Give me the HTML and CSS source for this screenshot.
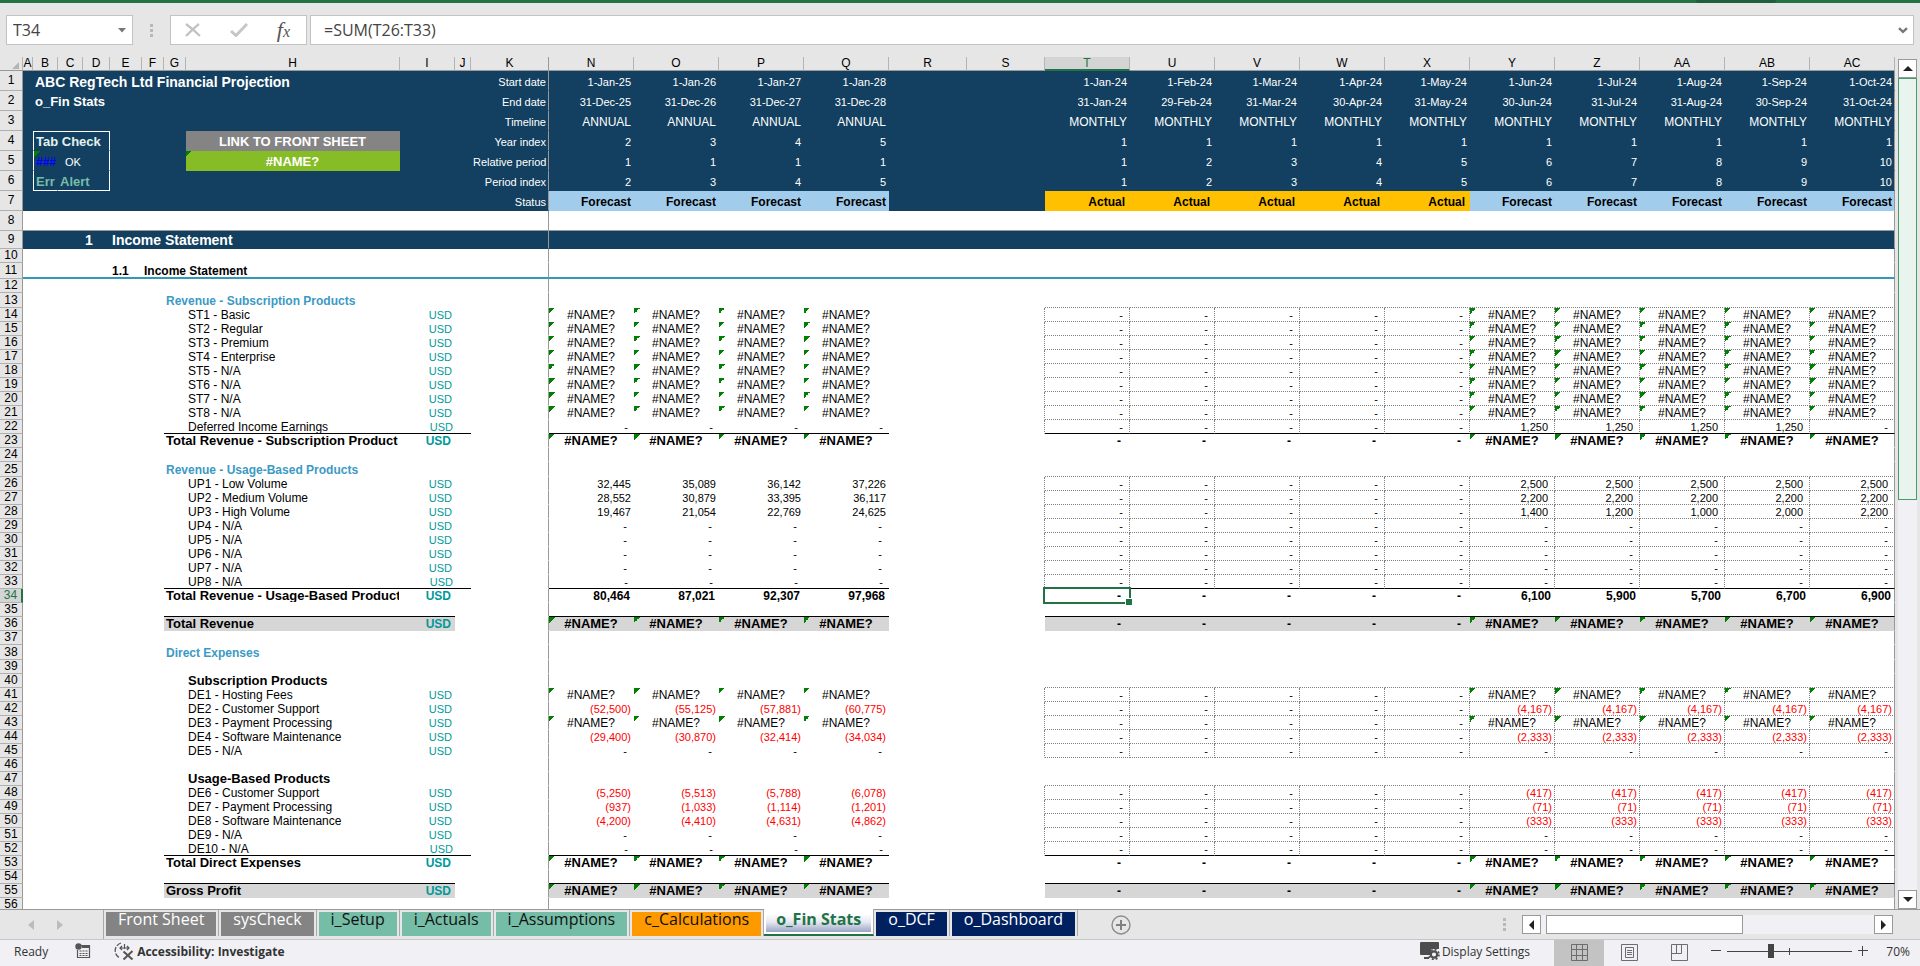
FILE: index.html
```html
<!DOCTYPE html>
<html lang="en">
<head>
<meta charset="utf-8">
<title>o_Fin Stats</title>
<link rel="stylesheet" href="styles.css">
</head>
<body>
<div class="titlebar"><span class="titlebar-search"></span></div>
<header class="formula-bar">
  <div class="name-box">
    <input class="bar-input" type="text" value="T34" aria-label="Name box">
    <button class="name-arrow" aria-label="Open name list"><svg width="8" height="5" viewBox="0 0 8 5"><path d="M0 0h8L4 4.5z" fill="#777"/></svg></button>
  </div>
  <span class="grip"></span>
  <div class="fx-buttons">
    <button aria-label="Cancel"><svg width="16" height="14" viewBox="0 0 16 14"><path d="M1 1C5 4 10 8 15 13M14 1C10 4 5 9 1 13" fill="none" stroke="#c2c2c2" stroke-width="2.2"/></svg></button>
    <button aria-label="Enter"><svg width="18" height="14" viewBox="0 0 18 14"><path d="M1 8l5 4.5L17 1" fill="none" stroke="#c6c6c6" stroke-width="3"/></svg></button>
    <button class="fx" aria-label="Insert function"><i>f</i><i class="fx-small">x</i></button>
  </div>
  <div class="formula-box">
    <input class="bar-input" type="text" value="=SUM(T26:T33)" aria-label="Formula">
    <button class="expand" aria-label="Expand formula bar"><svg width="10" height="7" viewBox="0 0 10 7"><path d="M1 1.2l4 3.6 4-3.6" fill="none" stroke="#777" stroke-width="2.4"/></svg></button>
  </div>
</header>
<main class="workspace">
  <div class="sheet">
    <table class="grid">
      <colgroup id="cols"></colgroup>
      <thead><tr id="heads"></tr></thead>
      <tbody id="rows"></tbody>
    </table>
  </div>
  <div class="vscroll">
    <button class="scroll-btn" aria-label="Scroll up"><svg width="10" height="5" viewBox="0 0 10 5"><path d="M0 5h10L5 0z" fill="#222"/></svg></button>
    <div class="vtrack"><div class="vthumb"></div></div>
    <button class="scroll-btn" aria-label="Scroll down"><svg width="10" height="5" viewBox="0 0 10 5"><path d="M0 0h10L5 5z" fill="#222"/></svg></button>
  </div>
</main>
<nav class="tab-bar">
  <div class="tab-nav">
    <button aria-label="Previous sheet"><svg width="6" height="10" viewBox="0 0 6 10"><path d="M6 0v10L0 5z" fill="#bcbcbc"/></svg></button>
    <button aria-label="Next sheet"><svg width="6" height="10" viewBox="0 0 6 10"><path d="M0 0v10l6-5z" fill="#bcbcbc"/></svg></button>
  </div>
  <div class="tabs">
    <button class="tab grey"><span>Front Sheet</span></button>
    <button class="tab grey"><span>sysCheck</span></button>
    <button class="tab teal"><span>i_Setup</span></button>
    <button class="tab teal"><span>i_Actuals</span></button>
    <button class="tab teal"><span>i_Assumptions</span></button>
    <button class="tab orange"><span>c_Calculations</span></button>
    <button class="tab active"><span>o_Fin Stats</span></button>
    <button class="tab navy"><span>o_DCF</span></button>
    <button class="tab navy last"><span>o_Dashboard</span></button>
  </div>
  <button class="add-tab" aria-label="New sheet"><svg width="20" height="20" viewBox="0 0 20 20"><circle cx="10" cy="10" r="9" fill="none" stroke="#8c8c8c" stroke-width="1.4"/><path d="M10 5v10M5 10h10" stroke="#808080" stroke-width="2"/></svg></button>
  <span class="grip"></span>
  <div class="hscroll">
    <button class="scroll-btn" aria-label="Scroll left"><svg width="5" height="10" viewBox="0 0 5 10"><path d="M5 0v10L0 5z" fill="#222"/></svg></button>
    <div class="htrack"><div class="hthumb"></div></div>
    <button class="scroll-btn" aria-label="Scroll right"><svg width="5" height="10" viewBox="0 0 5 10"><path d="M0 0v10l5-5z" fill="#222"/></svg></button>
  </div>
</nav>
<footer class="status-bar">
  <span class="ready">Ready</span>
  <button class="macro" aria-label="Record macro"><svg width="16" height="16" viewBox="0 0 16 16"><path d="M5 2.5h9.5v12H2.500V7" fill="none" stroke="#555" stroke-width="1.200"/><path d="M7 2h8v3H7z" fill="#555"/><circle cx="3.500" cy="3.500" r="3.200" fill="#555"/><path d="M4.500 8h2M7.500 8h2M10.500 8h2M4.500 10.500h2M7.500 10.500h2M10.500 10.500h2M4.500 12.500h2M7.500 12.500h2M10.500 12.500h2" stroke="#555"/></svg></button>
  <button class="access"><svg width="20" height="18" viewBox="0 0 20 18"><path d="M7 1A8 8 0 0 0 5 15.500" fill="none" stroke="#555" stroke-width="1.300" stroke-dasharray="5 1.500"/><path d="M6 6h9M8 4L6 6l2 2M13 4l2 2-2 2M10.500 2v5" fill="none" stroke="#555" stroke-width="1.200"/><path d="M9.500 9.500l9 8M18.500 9L9.500 17.500" stroke="#555" stroke-width="2"/></svg><span>Accessibility: Investigate</span></button>
  <button class="display"><svg width="20" height="18" viewBox="0 0 20 18"><path d="M1 0h17a1 1 0 0 1 1 1v6h-8v6H1a1 1 0 0 1-1-1V1a1 1 0 0 1 1-1zM4 15h5v2H4z" fill="#4d4d4d"/><circle cx="14" cy="12.500" r="3.200" fill="none" stroke="#4d4d4d" stroke-width="2.200"/><circle cx="14" cy="12.500" r="5" fill="none" stroke="#4d4d4d" stroke-width="1.600" stroke-dasharray="2 1.930"/></svg><span>Display Settings</span></button>
  <div class="views">
    <button class="on" aria-label="Normal view"><svg width="17" height="17" viewBox="0 0 17 17"><path d="M.5.5h16v16H.5zM.5 5.500h16M.5 11.500h16M5.500.5v16M11.500.5v16" fill="none" stroke="#6d6d6d"/></svg></button>
    <button aria-label="Page layout view"><svg width="17" height="17" viewBox="0 0 17 17"><path d="M.5.5h16v16H.5zM4.500 3.500h8v10h-8zM6 6.500h5M6 8.500h5M6 10.500h5" fill="none" stroke="#6d6d6d"/></svg></button>
    <button aria-label="Page break view"><svg width="17" height="17" viewBox="0 0 17 17"><path d="M.5.5h16v16H.5zM.5 9.500h10v-9M5.500.5v9" fill="none" stroke="#6d6d6d"/></svg></button>
  </div>
  <div class="zoom">
    <button aria-label="Zoom out"><svg width="10" height="10" viewBox="0 0 10 10"><path d="M0 4.500h10" stroke="#444"/></svg></button>
    <input type="range" min="0" max="125" value="43" aria-label="Zoom">
    <button aria-label="Zoom in"><svg width="10" height="10" viewBox="0 0 10 10"><path d="M0 4.500h10M4.500 0v10" stroke="#444"/></svg></button>
    <span class="percent">70%</span>
  </div>
</footer>
<script src="grid.js"></script>
</body>
</html>
```

FILE: styles.css
```css
* { box-sizing: border-box; }

body {
  margin: 0;
  height: 100vh;
  display: flex;
  flex-direction: column;
  overflow: hidden;
  background: #e6e6e6;
  color: #333;
  font-family: "Open Sans", "Noto Sans", sans-serif;
  font-size: 12px;
}

button {
  display: flex;
  align-items: center;
  justify-content: center;
  margin: 0;
  padding: 0;
  border: 0;
  background: none;
  color: inherit;
  font: inherit;
  white-space: nowrap;
}

svg { display: block; flex: none; }

.titlebar {
  flex: none;
  display: flex;
  justify-content: flex-end;
  height: 3px;
  padding-right: 144px;
  background: #217346;
}
.titlebar-search { width: 80px; background: #1e5f3c; border-radius: 0 0 8px 8px; }

.formula-bar {
  flex: none;
  display: flex;
  align-items: center;
  height: 54px;
  padding: 0 6px;
}
.name-box, .fx-buttons, .formula-box {
  display: flex;
  align-items: center;
  height: 30px;
  border: 1px solid #c3c3c3;
  background: #fff;
}
.name-box { width: 127px; padding-right: 6px; }
.bar-input {
  flex: 1;
  min-width: 0;
  border: 0;
  outline: 0;
  padding: 0 0 0 6px;
  background: none;
  color: #444;
  font: 16px/24px "Open Sans", "Noto Sans", sans-serif;
}
.formula-box .bar-input { padding-left: 13px; }
.formula-box { flex: 1; margin-left: 3px; padding-right: 5px; }
.grip {
  width: 3px;
  height: 13px;
  background: repeating-linear-gradient(#b8b8b8 0 3px, transparent 3px 5px);
}
.formula-bar .grip { margin: 0 17px; }
.fx-buttons { width: 137px; justify-content: space-between; padding: 0 16px 0 14px; }
.fx { color: #555; font: 22px/22px "Liberation Serif", serif; }
.fx-small { font-size: 16px; padding-top: 4px; }

.workspace { flex: 1; min-height: 0; display: flex; }
.sheet { flex: 1; min-width: 0; overflow: hidden; background: #fff; }

.grid {
  width: 1895px;
  table-layout: fixed;
  border-spacing: 0;
  color: #000;
  font: 11px/13px "Liberation Sans", Arial, sans-serif;
}
.grid th {
  padding: 0;
  overflow: hidden;
  background: #e6e6e6;
  border-right: 1px solid #b4b4b4;
  border-bottom: 1px solid #999;
  font-size: 12px;
  font-weight: 400;
}
.grid tbody th { border-right-color: #999; border-bottom-color: #b0b0b0; }
.grid thead th.at-k { border-right-color: #999; }
.grid thead th.current {
  background: #d4d4d4;
  color: #217346;
  line-height: 12px;
  border-bottom: 2px solid #217346;
}
.grid tbody th.current {
  background: #d4d4d4;
  color: #217346;
  border-right: 2px solid #217346;
}
.grid td {
  padding: 1px 2px 0 2px;
  border: 0 solid transparent;
  border-width: 0 1px 1px 0;
  line-height: 12px;
  white-space: nowrap;
  text-align: right;
}
.grid td.text { text-align: left; font-size: 12px; }
.grid td.name { text-align: center; font-size: 12px; }
.grid td.err {
  background-image: linear-gradient(135deg, #008000 50%, transparent 50%);
  background-size: 6px 6px;
  background-repeat: no-repeat;
}
.grid td.inset { padding-right: 6px; }
.grid td.red { color: #f00; }
.grid td.usd { color: #009999; font-size: 11px; }

.grid .top td { background-color: #134060; color: #fff; padding-top: 2px; }
.grid .top td.words { font-size: 12px; }
.grid .top td.forecast { background-color: #a2ccec; color: #000; }
.grid .top td.actual { background-color: #ffc000; color: #000; padding-right: 4px; }
.grid td.forecast, .grid td.actual { font-size: 12px; font-weight: 700; }
.grid td.title { font-size: 14px; font-weight: 700; }
.grid td.subtitle { font-size: 13px; font-weight: 700; }
.grid .top td.link { background-color: #848484; font-size: 13px; font-weight: 700; text-align: center; }
.grid .top td.link-value { background-color: #86bc25; font-size: 13px; font-weight: 700; text-align: center; }
.grid .top td.box-left { border-left: 1px solid #fff; }
.grid .top td.box-right { border-right-color: #fff; }
.grid .top td.box-top { border-top: 1px solid #fff; }
.grid .top td.box-bottom { border-bottom-color: #fff; }
.grid .top td.hash { color: #00f; font-weight: 700; }
.grid .top td.ok { font-size: 11px; padding-left: 7px; }
.grid .top td.alert { color: #75bda7; }
.grid .top td.pale { color: #e3f2ee; }

.grid .section td { background-color: #134060; color: #fff; font-weight: 700; font-size: 14px; }
.grid .subsection td { border-bottom: 2px solid #3399bb; border-right-width: 0; font-weight: 700; }
.grid .freeze td { border-bottom-color: #999; border-right-width: 0; }
.grid td.heading { color: #3b9ac4; font-weight: 700; }
.grid td.strong { font-weight: 700; font-size: 13px; }

.grid .total td { font-weight: 700; font-size: 12px; padding-right: 3px; }
.grid .total td.text, .grid .total td.name { padding-top: 0; font-size: 13px; line-height: 13px; }
.grid .total td.name { padding-right: 2px; }
.grid .total td.text { overflow: hidden; }
.grid .total td.inset { padding-right: 8px; }
.grid td.fill { background-color: #d6d6d6; }
.grid td.rule { border-bottom-color: #000; border-right-width: 0; }
.grid td.dots { border-bottom: 1px dotted #808080; }
.grid td.dots-side { border-right: 1px dotted #808080; }
.grid td.at-k, .grid td.at-end { border-right: 1px solid #999; }

.grid td.selected { position: relative; }
.selected::before {
  content: "";
  position: absolute;
  inset: -2px;
  border: 2px solid #217346;
}
.selected::after {
  content: "";
  position: absolute;
  right: -3px;
  bottom: -3px;
  width: 6px;
  height: 6px;
  border: solid #fff;
  border-width: 1px 0 0 1px;
  background: #217346;
}

.vscroll { flex: none; width: 25px; padding: 2px 3px 0 3px; display: flex; flex-direction: column; }
.scroll-btn { flex: none; width: 19px; height: 19px; border: 1px solid #999; background: #fff; }
.vtrack { flex: 1; background: #f0f0f5; }
.vthumb { height: 52%; background: #eaf4ee; border: 1px solid #4c9a6c; }

.tab-bar {
  flex: none;
  display: flex;
  align-items: center;
  height: 30px;
  border-top: 1px solid #999;
  padding-right: 27px;
}
.tab-nav { display: flex; gap: 23px; width: 103px; padding-left: 28px; }
.tabs { display: flex; align-self: stretch; border-left: 1px solid #aaa; }
.tab {
  height: 26px;
  padding: 2px 2px 0 2px;
  border-right: 1px solid #aaa;
  font-size: 16px;
}
.tab span { height: 24px; line-height: 15px; padding: 0 12px; }
.grey { color: #fff; }
.grey span { background: #848484; }
.teal { color: #111; }
.teal span { background: #75bda7; }
.orange { color: #111; }
.orange span { background: #ff9900; }
.navy { color: #fff; }
.navy span { background: #002060; }
.tab.active {
  height: 27px;
  margin-top: -1px;
  padding-top: 3px;
  align-items: flex-start;
  background: #fff;
  border-bottom: 2px solid #217346;
  color: #217346;
  font-weight: 700;
}
.active span { height: 20px; padding: 0 10px; background: linear-gradient(#fff 10%, #e6e8f0 50%, #9aa5c4); }
.add-tab { margin-left: 33px; }
.tab-bar .grip { margin-left: auto; margin-right: 16px; }
.hscroll { display: flex; width: 371px; }
.htrack { flex: 1; padding-left: 5px; background: #f0f0f5; }
.hthumb { width: 60%; height: 19px; background: #fff; border: 1px solid #999; }

.status-bar {
  flex: none;
  display: flex;
  align-items: center;
  height: 27px;
  padding: 0 10px 4px 14px;
  border-top: 1px solid #c6c6c6;
  background: #f0f0f5;
}
.macro { margin-left: 27px; }
.access { margin-left: 23px; gap: 3px; font-weight: 700; }
.display { margin-left: auto; gap: 2px; }
.views { display: flex; align-self: stretch; margin: 0 0 -4px 24px; }
.views button { width: 50px; padding-bottom: 2px; }
.views .on { background: #c3c3c3; }
.zoom { display: flex; align-items: center; margin-left: 7px; }
.zoom input {
  appearance: none;
  width: 125px;
  height: 15px;
  margin: 0 6px;
  background:
    linear-gradient(#444, #444) 50% 50% / 1px 7px no-repeat,
    linear-gradient(#444, #444) 0 50% / 100% 1px no-repeat;
}
.zoom input::-webkit-slider-thumb { appearance: none; width: 6px; height: 14px; background: #444; }
.percent { width: 42px; text-align: right; }
```

FILE: grid.js
```javascript
(() => {
const columns = [
  ["A", 10], ["B", 25], ["C", 25], ["D", 27], ["E", 32], ["F", 22], ["G", 22],
  ["H", 214], ["I", 55], ["J", 16], ["K", 78],
  ["N", 85], ["O", 85], ["P", 85], ["Q", 85], ["R", 78], ["S", 78],
  ["T", 85], ["U", 85], ["V", 85], ["W", 85], ["X", 85],
  ["Y", 85], ["Z", 85], ["AA", 85], ["AB", 85], ["AC", 85]
];
const letters = columns.map(c => c[0]);
const annual = ["N", "O", "P", "Q"];
const monthly = letters.slice(letters.indexOf("T"));
const ERR = "#NAME?";

const rep = (v, n) => Array(n).fill(v);
const errA = rep(ERR, 4);
const dashA = rep("-", 4);
const errM = rep("-", 5).concat(rep(ERR, 5));
const dashM = rep("-", 10);
const fc = (...v) => rep("-", 5).concat(v);

const timing = {
  1: ["Start date", ["1-Jan-25", "1-Jan-26", "1-Jan-27", "1-Jan-28"],
    ["1-Jan-24", "1-Feb-24", "1-Mar-24", "1-Apr-24", "1-May-24", "1-Jun-24", "1-Jul-24", "1-Aug-24", "1-Sep-24", "1-Oct-24"]],
  2: ["End date", ["31-Dec-25", "31-Dec-26", "31-Dec-27", "31-Dec-28"],
    ["31-Jan-24", "29-Feb-24", "31-Mar-24", "30-Apr-24", "31-May-24", "30-Jun-24", "31-Jul-24", "31-Aug-24", "30-Sep-24", "31-Oct-24"]],
  3: ["Timeline", rep("ANNUAL", 4), rep("MONTHLY", 10)],
  4: ["Year index", [2, 3, 4, 5], rep(1, 10)],
  5: ["Relative period", rep(1, 4), [1, 2, 3, 4, 5, 6, 7, 8, 9, 10]],
  6: ["Period index", [2, 3, 4, 5], [1, 2, 3, 4, 5, 6, 7, 8, 9, 10]],
  7: ["Status", rep("Forecast", 4), rep("Actual", 5).concat(rep("Forecast", 5))]
};

const items = {
  14: ["ST1 - Basic", errA, errM], 15: ["ST2 - Regular", errA, errM],
  16: ["ST3 - Premium", errA, errM], 17: ["ST4 - Enterprise", errA, errM],
  18: ["ST5 - N/A", errA, errM], 19: ["ST6 - N/A", errA, errM],
  20: ["ST7 - N/A", errA, errM], 21: ["ST8 - N/A", errA, errM],
  22: ["Deferred Income Earnings", dashA, fc("1,250", "1,250", "1,250", "1,250", "-")],
  26: ["UP1 - Low Volume", ["32,445", "35,089", "36,142", "37,226"], fc(...rep("2,500", 5))],
  27: ["UP2 - Medium Volume", ["28,552", "30,879", "33,395", "36,117"], fc(...rep("2,200", 5))],
  28: ["UP3 - High Volume", ["19,467", "21,054", "22,769", "24,625"], fc("1,400", "1,200", "1,000", "2,000", "2,200")],
  29: ["UP4 - N/A", dashA, dashM], 30: ["UP5 - N/A", dashA, dashM],
  31: ["UP6 - N/A", dashA, dashM], 32: ["UP7 - N/A", dashA, dashM],
  33: ["UP8 - N/A", dashA, dashM],
  41: ["DE1 - Hosting Fees", errA, errM],
  42: ["DE2 - Customer Support", ["(52,500)", "(55,125)", "(57,881)", "(60,775)"], fc(...rep("(4,167)", 5))],
  43: ["DE3 - Payment Processing", errA, errM],
  44: ["DE4 - Software Maintenance", ["(29,400)", "(30,870)", "(32,414)", "(34,034)"], fc(...rep("(2,333)", 5))],
  45: ["DE5 - N/A", dashA, dashM],
  48: ["DE6 - Customer Support", ["(5,250)", "(5,513)", "(5,788)", "(6,078)"], fc(...rep("(417)", 5))],
  49: ["DE7 - Payment Processing", ["(937)", "(1,033)", "(1,114)", "(1,201)"], fc(...rep("(71)", 5))],
  50: ["DE8 - Software Maintenance", ["(4,200)", "(4,410)", "(4,631)", "(4,862)"], fc(...rep("(333)", 5))],
  51: ["DE9 - N/A", dashA, dashM], 52: ["DE10 - N/A", dashA, dashM]
};

const totals = {
  23: ["Total Revenue - Subscription Product", errA, errM],
  34: ["Total Revenue - Usage-Based Product", ["80,464", "87,021", "92,307", "97,968"], fc("6,100", "5,900", "5,700", "6,700", "6,900")],
  36: ["Total Revenue", errA, errM, true],
  53: ["Total Direct Expenses", errA, errM],
  55: ["Gross Profit", errA, errM, true]
};

const headings = { 13: "Revenue - Subscription Products", 25: "Revenue - Usage-Based Products", 38: "Direct Expenses" };
const groups = { 40: "Subscription Products", 47: "Usage-Based Products" };

const fixed = {
  1: { B: ["ABC RegTech Ltd Financial Projection", "text title", 7] },
  2: { B: ["o_Fin Stats", "text subtitle", 6] },
  4: { B: ["Tab Check", "text subtitle pale box-left box-right box-top", 3], H: ["LINK TO FRONT SHEET", "link"] },
  5: { B: ["###", "text hash err box-left"], C: ["OK", "text ok"], D: ["", "box-right"], H: [ERR, "link-value err"] },
  6: { B: ["Err", "text subtitle alert box-left box-bottom"], C: ["Alert", "text subtitle alert box-right box-bottom", 2] },
  9: { D: ["1", "text title"], E: ["Income Statement", "text title", 4] },
  11: { E: ["1.1", "text"], F: ["Income Statement", "text", 3] }
};

const heights = { 9: 18, 11: 16, 13: 15, 25: 15, 38: 15 };
const heightOf = r => heights[r] || (r < 9 ? 20 : 14);

function figureClass(v, isMonthly, isTotal) {
  if (v === ERR) return "name err";
  if (v === "-") return "inset";
  if (v[0] === "(") return "red";
  return isMonthly && !isTotal ? "inset" : "";
}

function cellsFor(r) {
  const cells = { ...(fixed[r] || {}) };
  const src = timing[r] || items[r] || totals[r];
  if (headings[r]) cells.G = [headings[r], "text heading", 2];
  if (groups[r]) cells.H = [groups[r], "text strong"];
  if (!src) return cells;
  if (timing[r]) cells.K = [src[0], ""];
  if (items[r]) cells.H = [src[0], "text"];
  if (totals[r]) cells.G = [src[0], "text", 2];
  if (!timing[r]) cells.I = ["USD", "usd"];
  const put = (cols, values, isMonthly) => cols.forEach((c, i) => {
    const v = values[i];
    let cls;
    if (timing[r]) cls = r === 7 ? v.toLowerCase() : r === 3 ? "words" : "";
    else cls = figureClass(v, isMonthly, !!totals[r]);
    cells[c] = [v, cls];
  });
  put(annual, src[1], false);
  put(monthly, src[2], true);
  return cells;
}

function lineClass(r, c) {
  const out = [];
  const isMonthly = monthly.includes(c);
  const isFigure = isMonthly || annual.includes(c);
  const next = totals[r + 1];
  if (next && (isFigure || "GHI".includes(c) || (c === "J" && !next[3]))) out.push("rule");
  else if (isMonthly && (items[r] || items[r + 1])) out.push("dots");
  if (items[r] && (isMonthly || c === "S")) out.push("dots-side");
  if (totals[r] && totals[r][3] && (isFigure || "GHI".includes(c))) out.push("fill");
  if (c === "K") out.push("at-k");
  if (c === "AC") out.push("at-end");
  if (r === 34 && c === "T") out.push("selected");
  return out.join(" ");
}

document.getElementById("cols").innerHTML =
  `<col style="width:23px">` + columns.map(c => `<col style="width:${c[1]}px">`).join("");

document.getElementById("heads").innerHTML =
  `<th><svg width="20" height="12" viewBox="0 0 20 12"><path d="M19 4v7h-7z" fill="#b4b4b4"/></svg></th>` +
  letters.map(l => `<th class="${l === "T" ? "current" : l === "K" ? "at-k" : ""}">${l}</th>`).join("");

let html = "";
for (let r = 1; r <= 56; r++) {
  const cells = cellsFor(r);
  const kind = r <= 7 ? "top" : r === 8 ? "freeze" : r === 9 ? "section" : r === 11 ? "subsection" : totals[r] ? "total" : "";
  html += `<tr class="${kind}" style="height:${heightOf(r)}px"><th class="${r === 34 ? "current" : ""}">${r}</th>`;
  for (let i = 0; i < letters.length;) {
    const c = letters[i];
    const [value, cls, span = 1] = cells[c] || ["", ""];
    html += `<td class="${cls} ${lineClass(r, c)}"${span > 1 ? ` colspan="${span}"` : ""}>${value}</td>`;
    i += span;
  }
  html += "</tr>";
}
document.getElementById("rows").innerHTML = html;
})();
```
